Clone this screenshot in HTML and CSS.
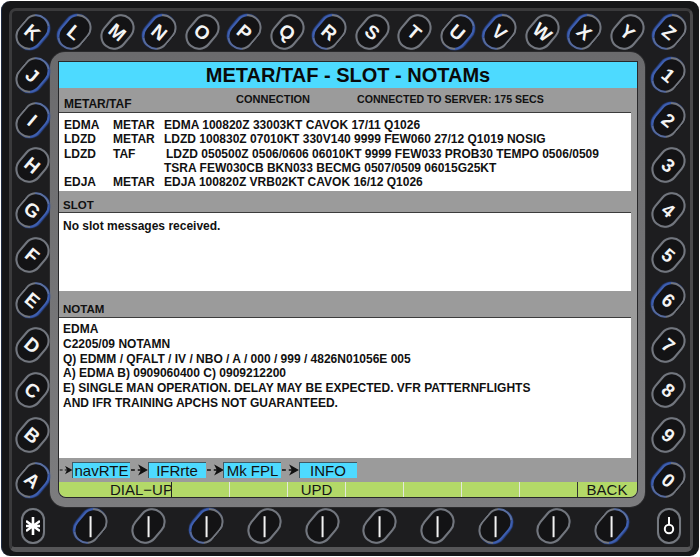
FILE: index.html
```html
<!DOCTYPE html>
<html lang="en">
<head>
<meta charset="utf-8">
<title>METAR/TAF - SLOT - NOTAMs</title>
<link rel="stylesheet" href="styles.css">
</head>
<body>
<div class="device">
  <div class="bezel">
    <div class="key-row">
      <div class="key"><span class="pill br">K</span></div>
      <div class="key"><span class="pill bl">L</span></div>
      <div class="key"><span class="pill">M</span></div>
      <div class="key"><span class="pill bl">N</span></div>
      <div class="key"><span class="pill">O</span></div>
      <div class="key"><span class="pill bl">P</span></div>
      <div class="key"><span class="pill">Q</span></div>
      <div class="key"><span class="pill bl">R</span></div>
      <div class="key"><span class="pill">S</span></div>
      <div class="key"><span class="pill">T</span></div>
      <div class="key"><span class="pill br">U</span></div>
      <div class="key"><span class="pill bl">V</span></div>
      <div class="key"><span class="pill">W</span></div>
      <div class="key"><span class="pill bl">X</span></div>
      <div class="key"><span class="pill">Y</span></div>
      <div class="key"><span class="pill bl">Z</span></div>
    </div>
    <div class="middle">
      <div class="key-col">
        <div class="key"><span class="pill br">J</span></div>
        <div class="key"><span class="pill br">I</span></div>
        <div class="key"><span class="pill">H</span></div>
        <div class="key"><span class="pill br">G</span></div>
        <div class="key"><span class="pill">F</span></div>
        <div class="key"><span class="pill br">E</span></div>
        <div class="key"><span class="pill">D</span></div>
        <div class="key"><span class="pill">C</span></div>
        <div class="key"><span class="pill">B</span></div>
        <div class="key"><span class="pill br">A</span></div>
      </div>
      <div class="frame">
        <div class="screen">
          <h1 class="title">METAR/TAF - SLOT - NOTAMs</h1>
          <div class="head head-first">
            <span class="head-main">METAR/TAF</span>
            <span class="head-conn">CONNECTION</span>
            <span class="head-time">CONNECTED TO SERVER: 175 SECS</span>
          </div>
          <div class="panel panel-metar">
            <div class="metar-grid">
              <span>EDMA</span><span>METAR</span><span>EDMA 100820Z 33003KT CAVOK 17/11 Q1026</span>
              <span>LDZD</span><span>METAR</span><span>LDZD 100830Z 07010KT 330V140 9999 FEW060 27/12 Q1019 NOSIG</span>
              <span>LDZD</span><span>TAF</span><span class="taf"><span class="taf-first">LDZD 050500Z 0506/0606 06010KT 9999 FEW033 PROB30 TEMPO 0506/0509</span><br>TSRA FEW030CB BKN033 BECMG 0507/0509 06015G25KT</span>
              <span>EDJA</span><span>METAR</span><span>EDJA 100820Z VRB02KT CAVOK 16/12 Q1026</span>
            </div>
          </div>
          <div class="head head-slot"><span class="head-side">SLOT</span></div>
          <div class="panel panel-slot">No slot messages received.</div>
          <div class="head head-notam"><span class="head-side">NOTAM</span></div>
          <div class="panel panel-notam">
            EDMA<br>
            C2205/09 NOTAMN<br>
            Q) EDMM / QFALT / IV / NBO / A / 000 / 999 / 4826N01056E 005<br>
            A) EDMA B) 0909060400 C) 0909212200<br>
            E) SINGLE MAN OPERATION. DELAY MAY BE EXPECTED. VFR PATTERNFLIGHTS<br>
            AND IFR TRAINING APCHS NOT GUARANTEED.
          </div>
          <div class="nav">
            <svg class="arrow arrow-first" viewBox="0 0 18 12"><path d="M1 6h4M8 6h6M10 2l7 4-7 4 2-4z"/></svg>
            <span class="tab">navRTE</span>
            <svg class="arrow" viewBox="0 0 18 12"><path d="M1 6h4M8 6h6M10 2l7 4-7 4 2-4z"/></svg>
            <span class="tab">IFRrte</span>
            <svg class="arrow" viewBox="0 0 18 12"><path d="M1 6h4M8 6h6M10 2l7 4-7 4 2-4z"/></svg>
            <span class="tab">Mk FPL</span>
            <svg class="arrow" viewBox="0 0 18 12"><path d="M1 6h4M8 6h6M10 2l7 4-7 4 2-4z"/></svg>
            <span class="tab">INFO</span>
          </div>
          <div class="soft">
            <span class="cell cell-dial"><span class="dial-text">DIAL−UP</span></span>
            <span class="cell"></span>
            <span class="cell"></span>
            <span class="cell">UPD</span>
            <span class="cell"></span>
            <span class="cell"></span>
            <span class="cell"></span>
            <span class="cell cell-pre"></span>
            <span class="cell cell-back">BACK</span>
          </div>
        </div>
      </div>
      <div class="key-col key-col-right">
        <div class="key"><span class="pill bl">1</span></div>
        <div class="key"><span class="pill bl">2</span></div>
        <div class="key"><span class="pill">3</span></div>
        <div class="key"><span class="pill">4</span></div>
        <div class="key"><span class="pill">5</span></div>
        <div class="key"><span class="pill bl">6</span></div>
        <div class="key"><span class="pill">7</span></div>
        <div class="key"><span class="pill">8</span></div>
        <div class="key"><span class="pill">9</span></div>
        <div class="key"><span class="pill bl">0</span></div>
      </div>
    </div>
    <div class="key-row key-row-bottom">
      <div class="key"><span class="pill pill-up bb">
        <svg class="glyph" viewBox="0 0 14 18"><path d="M7 0v18M0 4l14 10M14 4L0 14M0 9h14"/></svg>
      </span></div>
      <div class="key"><span class="pill bl"><i class="bar"></i></span></div>
      <div class="key"><span class="pill"><i class="bar"></i></span></div>
      <div class="key"><span class="pill bl"><i class="bar"></i></span></div>
      <div class="key"><span class="pill"><i class="bar"></i></span></div>
      <div class="key"><span class="pill"><i class="bar"></i></span></div>
      <div class="key"><span class="pill"><i class="bar"></i></span></div>
      <div class="key"><span class="pill"><i class="bar"></i></span></div>
      <div class="key"><span class="pill br"><i class="bar"></i></span></div>
      <div class="key"><span class="pill"><i class="bar"></i></span></div>
      <div class="key"><span class="pill br"><i class="bar"></i></span></div>
      <div class="key"><span class="pill pill-up">
        <svg class="glyph" viewBox="0 0 14 18"><path class="thin" d="M7 0v8"/><circle class="thin" cx="7" cy="12" r="4.2"/></svg>
      </span></div>
    </div>
  </div>
</div>
</body>
</html>
```
FILE: styles.css
```css
* { box-sizing: border-box; }

html, body {
  margin: 0;
  padding: 0;
  background: #fff;
  overflow: hidden;
}

body {
  width: 700px;
  height: 557px;
  font-family: "Liberation Sans", Arial, sans-serif;
  color: #111;
}

.device {
  width: 698px;
  height: 555px;
  margin: 1px;
  padding: 7px 6px 4px 7px;
  background: #151618;
  border-radius: 9px;
  border-left: 1px solid #1f2c44;
}

.bezel {
  height: 100%;
  display: flex;
  flex-direction: column;
  padding: 4px 3px 2px 3px;
  background: #1d1d1f;
  border-style: solid;
  border-width: 3px 3px 5px 3px;
  border-color: #3a3a3c #4a4a4c #565658 #3a3a3c;
  border-radius: 7px;
}

.key-row {
  height: 34px;
  display: flex;
  justify-content: space-between;
}

.key-row-bottom {
  margin-top: 2px;
  padding: 0 1px 0 1px;
}

.middle {
  margin-top: 3px;
  height: 455px;
  display: flex;
}

.key-col {
  width: 34px;
  display: flex;
  flex-direction: column;
  justify-content: space-between;
  padding: 6px 0 10px;
}

.key-col-right {
  margin-left: 6px;
}

.key {
  width: 34px;
  height: 34px;
  display: flex;
  align-items: center;
  justify-content: center;
}

.pill {
  flex: none;
  width: 27px;
  height: 38px;
  display: flex;
  align-items: center;
  justify-content: center;
  border: 2px solid #72767e;
  border-radius: 13.5px;
  background: #131315;
  transform: rotate(40deg);
  color: #f4f4f4;
  font-size: 19px;
  font-weight: 700;
  line-height: 1;
  box-shadow: 0 0 1px #44474d;
}

.br {
  border-right-color: #3f5fae;
  border-top-color: #5a6f9f;
  box-shadow: 1px 0 1px #2d4d9e;
}

.bl {
  border-left-color: #3f5fae;
  border-bottom-color: #566a9c;
  box-shadow: -1px 0 1px #2d4d9e;
}

.bb {
  border-bottom-color: #4f6aaa;
}

.pill-up {
  transform: none;
  width: 24px;
  height: 36px;
  border-radius: 12px;
  border-color: #74787f;
}

.bar {
  width: 2px;
  height: 21px;
  background: #f2f2f2;
  transform: rotate(-40deg);
}

.glyph {
  width: 14px;
  height: 18px;
  fill: none;
  stroke: #fff;
  stroke-width: 2.6;
}

.glyph .thin {
  stroke-width: 2;
}

.frame {
  flex: none;
  width: 595px;
  height: 455px;
  margin-left: 1px;
  padding: 10px 8px 10px 9px;
  background: linear-gradient(#6b6b6d, #7c7c7e);
  border-radius: 15px;
  box-shadow: 0 0 0 1px #2a2a2c;
}

.screen {
  height: 435px;
  display: flex;
  flex-direction: column;
  background: #9b9b9b;
  border-radius: 0 0 7px 7px;
  overflow: hidden;
  box-shadow: 0 0 0 1px #28282a;
}

.title {
  flex: none;
  margin: 0;
  height: 26px;
  background: #4ddaff;
  font-size: 20px;
  line-height: 26px;
  font-weight: 700;
  text-align: center;
  color: #0a0a0a;
}

.head {
  display: flex;
  font-size: 11px;
  font-weight: 700;
  border-bottom: 1px solid #3c3c3c;
  margin-right: 6px;
}

.head-first {
  height: 25px;
  padding: 5px 0 0 5px;
}

.head-main {
  width: 172px;
  padding-top: 4px;
  font-size: 12px;
}

.head-conn {
  width: 121px;
}

.head-time {
  font-size: 10.6px;
}

.head-slot {
  height: 22px;
  padding: 8px 0 0 4px;
}

.head-notam {
  height: 27px;
  padding: 12px 0 0 4px;
}

.head-side {
  font-size: 11.5px;
}

.panel {
  background: #fff;
  margin-right: 6px;
  font-size: 12px;
  font-weight: 700;
}

.panel-metar {
  height: 78px;
  padding: 5px 0 0 5px;
  line-height: 14.3px;
}

.metar-grid {
  display: grid;
  grid-template-columns: 49px 51px 1fr;
}

.taf-first {
  margin-left: 2px;
}

.panel-slot {
  height: 78px;
  padding: 6px 0 0 4px;
  line-height: 14px;
}

.panel-notam {
  height: 140px;
  padding: 4px 0 0 4px;
  line-height: 14.8px;
}

.nav {
  height: 24px;
  display: flex;
  align-items: flex-start;
  padding: 4px 0 0 0;
}

.arrow {
  flex: none;
  width: 17.5px;
  height: 12px;
  margin-top: 2px;
  fill: #111;
  stroke: #111;
  stroke-width: 1.4;
}

.arrow-first {
  width: 13px;
}

.tab {
  flex: none;
  width: 58px;
  height: 16px;
  background: #4ddaff;
  border-top: 1px solid #3d5a66;
  border-left: 1px solid #3d5a66;
  font-size: 15px;
  line-height: 15px;
  text-align: center;
}

.soft {
  flex: none;
  height: 15px;
  display: flex;
  background: #b3d968;
  border-radius: 0 0 7px 7px;
  overflow: hidden;
}

.cell {
  flex: none;
  width: 58px;
  height: 15px;
  border-right: 1px solid #e4e8dc;
  font-size: 15px;
  line-height: 15px;
  text-align: center;
  color: #151515;
}

.cell-dial {
  width: 113px;
  border-right: 1px solid #222;
  overflow: hidden;
  white-space: nowrap;
  text-align: left;
  padding-left: 51px;
}

.cell-pre {
  border-right-color: #333;
}

.cell-back {
  width: 58px;
  border-right: 0;
}
```
